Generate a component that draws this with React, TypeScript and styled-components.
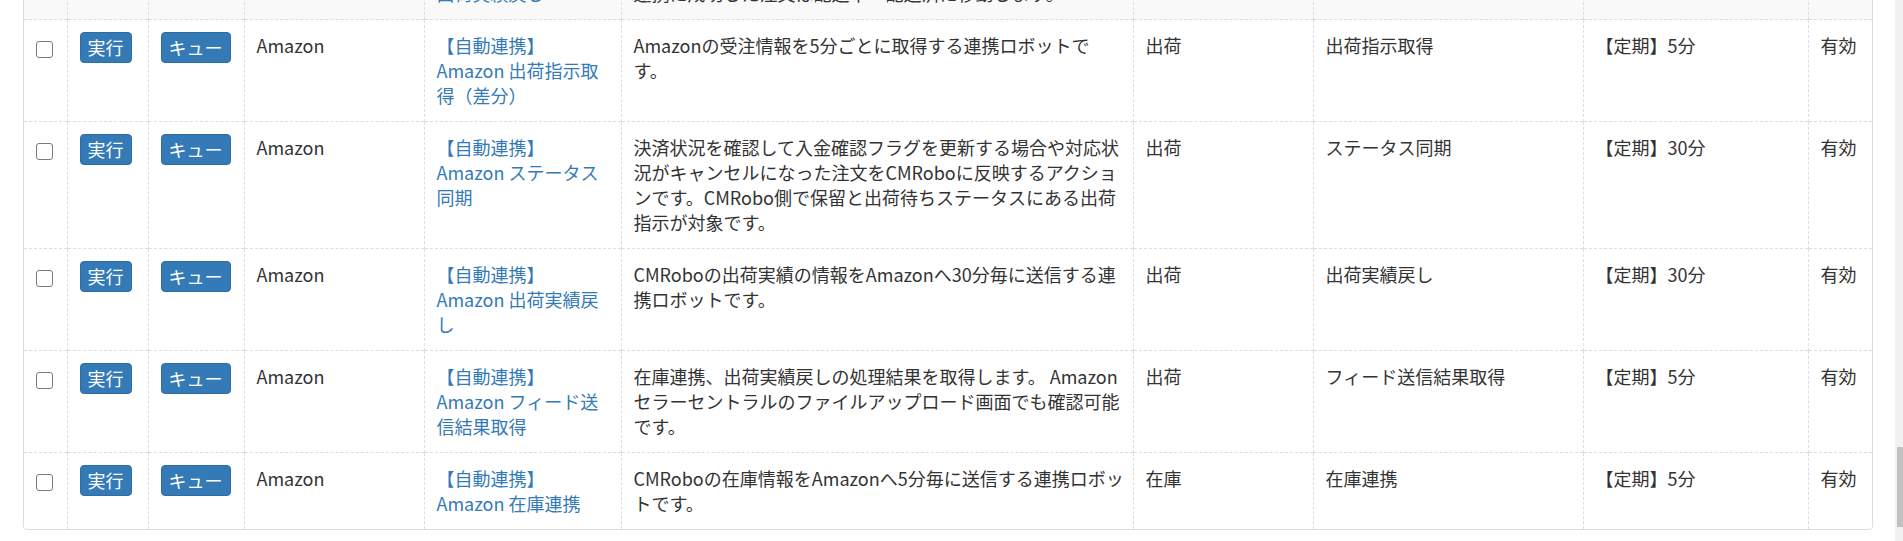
import React from "react";
import styled, { createGlobalStyle } from "styled-components";

const GlobalStyle = createGlobalStyle`
  html, body { margin: 0; padding: 0; background: #fff; }
  body {
    font-family: "Noto Sans CJK JP", "Noto Sans", sans-serif;
    color: #333;
  }
  * { box-sizing: border-box; }
`;

const Viewport = styled.div`
  display: flex;
  width: 100%;
  height: 541px;
  overflow: hidden;
`;

const Main = styled.main`
  flex: 1;
  display: flex;
  flex-direction: column;
  justify-content: flex-end;
  padding: 0 22px 11px 23px;
  overflow: hidden;
`;

const ScrollTrack = styled.div`
  width: 8px;
  flex: none;
  background: #f1f1f1;
  display: flex;
  flex-direction: column;
  justify-content: flex-end;
  align-items: flex-end;
  padding-bottom: 14px;
`;

const ScrollThumb = styled.div`
  width: 6px;
  height: 80px;
  background: #c1c1c1;
`;

const Panel = styled.section`
  flex: none;
  border: 1px solid #ddd;
  border-radius: 4px;
  background: #fff;
  overflow: hidden;
`;

const Table = styled.table`
  width: 100%;
  border-collapse: collapse;
  table-layout: fixed;
  font-size: 18px;
  line-height: 25px;
`;

const Row = styled.tr<{ $shaded?: boolean }>`
  background: ${(p) => (p.$shaded ? "#f9f9f9" : "#fff")};
`;

const Cell = styled.td`
  vertical-align: top;
  padding: 13px 12px;
  border-top: 1px dashed #ddd;
  border-left: 1px dashed #ddd;
  &:first-child { border-left: none; }
`;

const Check = styled.input.attrs({ type: "checkbox" })`
  appearance: none;
  display: block;
  width: 17px;
  height: 17px;
  margin: 8px 0 0 0;
  border: 1.5px solid #7a7a7a;
  border-radius: 3px;
  background: #fff;
`;

const ActionButton = styled.button`
  display: flex;
  align-items: center;
  justify-content: center;
  height: 31px;
  margin: -1px 0 0 0;
  padding: 0 7px;
  font-family: inherit;
  font-size: 18px;
  line-height: 25px;
  color: #fff;
  background: #337ab7;
  border: 1px solid #2e6da4;
  border-radius: 4px;
  white-space: nowrap;
`;

const RobotLink = styled.a`
  display: block;
  color: #337ab7;
  text-decoration: none;
`;

const Line = styled.span`
  display: block;
  white-space: nowrap;
`;

type Robot = {
  shop: string;
  name: string[];
  desc: string[];
  kind: string;
  action: string;
  schedule: string;
  status: string;
};

const robots: Robot[] = [
  {
    shop: "Amazon",
    name: ["【自動連携】", "Amazon 出荷指示取", "得（差分）"],
    desc: ["Amazonの受注情報を5分ごとに取得する連携ロボットで", "す。"],
    kind: "出荷",
    action: "出荷指示取得",
    schedule: "【定期】5分",
    status: "有効",
  },
  {
    shop: "Amazon",
    name: ["【自動連携】", "Amazon ステータス", "同期"],
    desc: [
      "決済状況を確認して入金確認フラグを更新する場合や対応状",
      "況がキャンセルになった注文をCMRoboに反映するアクショ",
      "ンです。CMRobo側で保留と出荷待ちステータスにある出荷",
      "指示が対象です。",
    ],
    kind: "出荷",
    action: "ステータス同期",
    schedule: "【定期】30分",
    status: "有効",
  },
  {
    shop: "Amazon",
    name: ["【自動連携】", "Amazon 出荷実績戻", "し"],
    desc: ["CMRoboの出荷実績の情報をAmazonへ30分毎に送信する連", "携ロボットです。"],
    kind: "出荷",
    action: "出荷実績戻し",
    schedule: "【定期】30分",
    status: "有効",
  },
  {
    shop: "Amazon",
    name: ["【自動連携】", "Amazon フィード送", "信結果取得"],
    desc: [
      "在庫連携、出荷実績戻しの処理結果を取得します。 Amazon",
      "セラーセントラルのファイルアップロード画面でも確認可能",
      "です。",
    ],
    kind: "出荷",
    action: "フィード送信結果取得",
    schedule: "【定期】5分",
    status: "有効",
  },
  {
    shop: "Amazon",
    name: ["【自動連携】", "Amazon 在庫連携"],
    desc: ["CMRoboの在庫情報をAmazonへ5分毎に送信する連携ロボッ", "トです。"],
    kind: "在庫",
    action: "在庫連携",
    schedule: "【定期】5分",
    status: "有効",
  },
];

const previous: Robot = {
  shop: "楽天",
  name: ["【自動連携】", "出荷実績戻し"],
  desc: ["楽天の出荷実績を送信する連携ロボットです。", "連携に成功した注文は配送中・配送済に移動します。"],
  kind: "出荷",
  action: "出荷実績戻し",
  schedule: "【定期】30分",
  status: "有効",
};

const widths = [43, 81, 96, 180, 197, 512, 180, 270, 225];

function RobotRow({ robot, shaded }: { robot: Robot; shaded?: boolean }) {
  return (
    <Row $shaded={shaded}>
      <Cell>
        <Check />
      </Cell>
      <Cell>
        <ActionButton>実行</ActionButton>
      </Cell>
      <Cell>
        <ActionButton>キュー</ActionButton>
      </Cell>
      <Cell>{robot.shop}</Cell>
      <Cell>
        <RobotLink href="#">
          {robot.name.map((l, i) => (
            <Line key={i}>{l}</Line>
          ))}
        </RobotLink>
      </Cell>
      <Cell>
        {robot.desc.map((l, i) => (
          <Line key={i}>{l}</Line>
        ))}
      </Cell>
      <Cell>{robot.kind}</Cell>
      <Cell>{robot.action}</Cell>
      <Cell>{robot.schedule}</Cell>
      <Cell>{robot.status}</Cell>
    </Row>
  );
}

export default function App() {
  return (
    <>
      <GlobalStyle />
      <Viewport>
        <Main>
          <Panel>
            <Table>
              <colgroup>
                {widths.map((w, i) => (
                  <col key={i} style={{ width: w }} />
                ))}
                <col />
              </colgroup>
              <tbody>
                <RobotRow robot={previous} shaded />
                {robots.map((r, i) => (
                  <RobotRow key={i} robot={r} />
                ))}
              </tbody>
            </Table>
          </Panel>
        </Main>
        <ScrollTrack>
          <ScrollThumb />
        </ScrollTrack>
      </Viewport>
    </>
  );
}
